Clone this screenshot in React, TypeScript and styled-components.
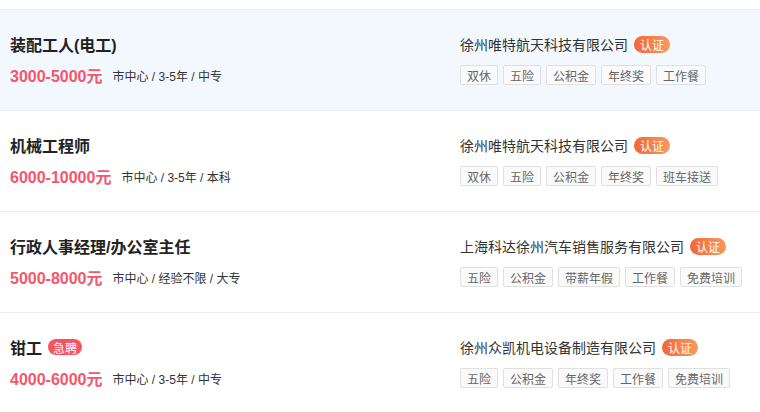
import styled, { createGlobalStyle } from "styled-components";

const GlobalStyle = createGlobalStyle`
  body {
    margin: 0;
    background: #fff;
    font-family: "Liberation Sans", "Noto Sans CJK SC", sans-serif;
    color: #333;
  }
`;

const List = styled.div`
  width: 760px;
  padding-top: 9px;
`;

const Item = styled.div<{ active?: boolean }>`
  display: grid;
  grid-template-columns: 450px 1fr;
  padding: 23px 0 24px 10px;
  border-top: 1px solid #ececf0;
  background: ${({ active }) => (active ? "#f3f8fe" : "#fff")};
`;

const Column = styled.div`
  display: flex;
  flex-direction: column;
`;

const TitleLine = styled.div`
  display: flex;
  align-items: center;
  height: 22px;
  gap: 6px;
`;

const Title = styled.span`
  font-size: 16px;
  font-weight: 600;
  color: #222;
`;

const UrgentBadge = styled.span`
  display: inline-flex;
  align-items: center;
  height: 16px;
  padding: 0 5px;
  border-radius: 8px;
  background: #f4555f;
  color: #fff;
  font-size: 12px;
`;

const InfoLine = styled.div`
  display: flex;
  align-items: center;
  height: 22px;
  margin-top: 9px;
  gap: 10px;
`;

const Salary = styled.span`
  font-size: 16px;
  font-weight: bold;
  color: #f4566b;
`;

const Meta = styled.span`
  font-size: 12px;
  color: #333;
`;

const CompanyLine = styled.div`
  display: flex;
  align-items: center;
  height: 22px;
  gap: 6px;
`;

const CompanyName = styled.span`
  font-size: 14px;
  color: #333;
`;

const CertBadge = styled.span`
  display: inline-flex;
  align-items: center;
  height: 17px;
  padding: 0 6px;
  border-radius: 9px;
  background: linear-gradient(90deg, #f2673a, #f89a5c);
  color: #fff;
  font-size: 12px;
`;

const Tags = styled.div`
  display: flex;
  gap: 5px;
  margin-top: 10px;
`;

const Tag = styled.span`
  display: inline-flex;
  align-items: center;
  height: 18px;
  padding: 0 6px;
  border: 1px solid #e0e0e0;
  border-radius: 2px;
  background: #fafafa;
  color: #666;
  font-size: 12px;
`;

interface Job {
  title: string;
  urgent?: boolean;
  salary: string;
  meta: string[];
  company: string;
  tags: string[];
}

const jobs: Job[] = [
  {
    title: "装配工人(电工)",
    salary: "3000-5000元",
    meta: ["市中心", "3-5年", "中专"],
    company: "徐州唯特航天科技有限公司",
    tags: ["双休", "五险", "公积金", "年终奖", "工作餐"],
  },
  {
    title: "机械工程师",
    salary: "6000-10000元",
    meta: ["市中心", "3-5年", "本科"],
    company: "徐州唯特航天科技有限公司",
    tags: ["双休", "五险", "公积金", "年终奖", "班车接送"],
  },
  {
    title: "行政人事经理/办公室主任",
    salary: "5000-8000元",
    meta: ["市中心", "经验不限", "大专"],
    company: "上海科达徐州汽车销售服务有限公司",
    tags: ["五险", "公积金", "带薪年假", "工作餐", "免费培训"],
  },
  {
    title: "钳工",
    urgent: true,
    salary: "4000-6000元",
    meta: ["市中心", "3-5年", "中专"],
    company: "徐州众凯机电设备制造有限公司",
    tags: ["五险", "公积金", "年终奖", "工作餐", "免费培训"],
  },
];

const JobRow = ({ job, active }: { job: Job; active?: boolean }) => (
  <Item active={active}>
    <Column>
      <TitleLine>
        <Title>{job.title}</Title>
        {job.urgent && <UrgentBadge>急聘</UrgentBadge>}
      </TitleLine>
      <InfoLine>
        <Salary>{job.salary}</Salary>
        <Meta>{job.meta.join(" / ")}</Meta>
      </InfoLine>
    </Column>
    <Column>
      <CompanyLine>
        <CompanyName>{job.company}</CompanyName>
        <CertBadge>认证</CertBadge>
      </CompanyLine>
      <Tags>
        {job.tags.map((t) => (
          <Tag key={t}>{t}</Tag>
        ))}
      </Tags>
    </Column>
  </Item>
);

export default function App() {
  return (
    <>
      <GlobalStyle />
      <List>
        {jobs.map((job, i) => (
          <JobRow key={i} job={job} active={i === 0} />
        ))}
      </List>
    </>
  );
}
